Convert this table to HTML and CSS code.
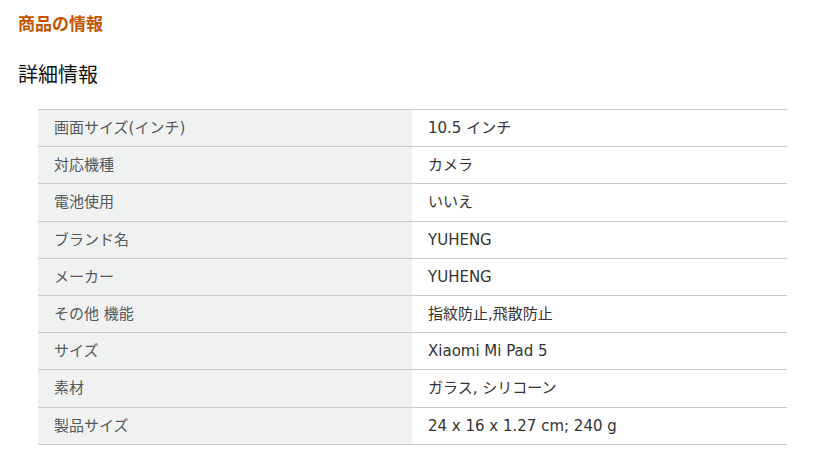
FILE: index.html
```html
<!DOCTYPE html>
<html lang="ja">
<head>
<meta charset="utf-8">
<link rel="stylesheet" href="styles.css">
</head>
<body>
<div class="page">
  <h2 class="section-title">商品の情報</h2>
  <h3 class="sub-title">詳細情報</h3>
  <table class="spec">
    <tr><th>画面サイズ(インチ)</th><td>10.5 インチ</td></tr>
    <tr><th>対応機種</th><td>カメラ</td></tr>
    <tr><th>電池使用</th><td>いいえ</td></tr>
    <tr><th>ブランド名</th><td>YUHENG</td></tr>
    <tr><th>メーカー</th><td>YUHENG</td></tr>
    <tr><th>その他 機能</th><td>指紋防止,飛散防止</td></tr>
    <tr><th>サイズ</th><td>Xiaomi Mi Pad 5</td></tr>
    <tr><th>素材</th><td>ガラス, シリコーン</td></tr>
    <tr><th>製品サイズ</th><td>24 x 16 x 1.27 cm; 240 g</td></tr>
  </table>
</div>
</body>
</html>
```
FILE: styles.css
```css
html, body {
  margin: 0;
  padding: 0;
  background: #ffffff;
}
body {
  font-family: "DejaVu Sans", "Noto Sans CJK JP", sans-serif;
  color: #0f1111;
}
.page {
  padding: 13px 0 0 18px;
}
.section-title {
  margin: 0;
  font-size: 17px;
  line-height: 22px;
  font-weight: bold;
  color: #c45500;
}
.sub-title {
  margin: 27px 0 0 0;
  font-size: 20px;
  line-height: 26px;
  font-weight: normal;
  color: #0f1111;
}
.spec {
  margin: 21px 0 0 20px;
  width: 749px;
  border-collapse: collapse;
  table-layout: fixed;
  font-size: 15px;
}
.spec th,
.spec td {
  height: 36.2px;
  padding: 0 16px;
  border-top: 1px solid #c8cccc;
  border-bottom: 1px solid #c8cccc;
  text-align: left;
  vertical-align: middle;
  font-weight: normal;
  line-height: 20px;
}
.spec th {
  width: 342px;
  background: #f0f2f2;
  color: #565959;
}
.spec td {
  color: #333333;
}
```
